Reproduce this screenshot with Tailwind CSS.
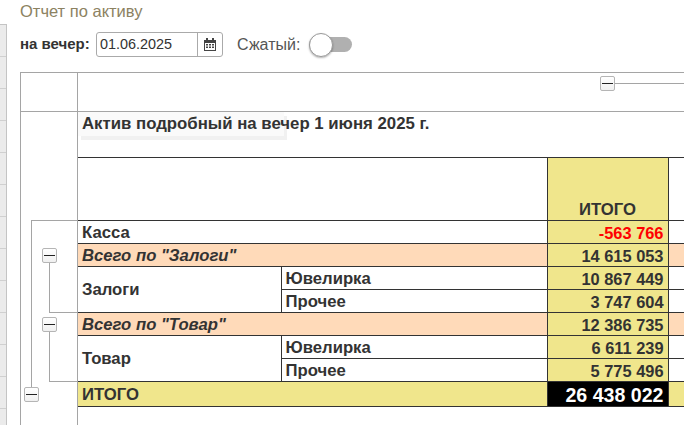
<!DOCTYPE html>
<html lang="en">

<head>
    <meta charset="UTF-8" />
    <script src="https://cdn.jsdelivr.net/npm/@tailwindcss/browser@4"></script>
    <title>Отчет по активу</title>
</head>

<body class="bg-white text-[#333] font-['Liberation_Sans',Arial,sans-serif] overflow-hidden">
    <div class="flex h-[425px] w-[684px] overflow-hidden">
        <!-- left strip -->
        <div class="mt-[24px] w-[7px] shrink-0 border-t border-r border-[#c4c4c4] bg-[#ebebeb]">
            <div class="h-[32px] border-b border-[#d0d0d0]"></div>
            <div class="h-[32px] border-b border-[#d0d0d0]"></div>
            <div class="h-[32px] border-b border-[#d0d0d0]"></div>
            <div class="h-[32px] border-b border-[#d0d0d0]"></div>
            <div class="h-[32px] border-b border-[#d0d0d0]"></div>
            <div class="h-[32px] border-b border-[#d0d0d0]"></div>
            <div class="h-[32px] border-b border-[#d0d0d0]"></div>
            <div class="h-[32px] border-b border-[#d0d0d0]"></div>
            <div class="h-[32px] border-b border-[#d0d0d0]"></div>
            <div class="h-[32px] border-b border-[#d0d0d0]"></div>
            <div class="h-[32px] border-b border-[#d0d0d0]"></div>
            <div class="h-[32px] border-b border-[#d0d0d0]"></div>
            <div class="h-[32px] border-b border-[#d0d0d0]"></div>
        </div>

        <div class="ml-[13px] w-[664px] shrink-0">
            <h1 class="h-[32px] pt-[2px] text-[16.5px] leading-[18px] text-[#8c8262]">Отчет по активу</h1>

            <div class="flex h-[25px] items-center text-[15px]">
                <b class="mr-[6px] w-[70px] whitespace-nowrap">на вечер:</b>
                <div class="flex h-[25px] w-[127px] rounded-[3px] border border-[#aaa]">
                    <div class="w-[100px] pl-[3px] text-[14.4px] leading-[22px]">01.06.2025</div>
                    <div class="flex flex-1 items-center justify-center border-l border-[#aaa]">
                        <svg width="12" height="13" viewBox="0 0 12 13" fill="#444">
                            <path d="M2 0h2v2H2zM8 0h2v2H8z" />
                            <path fill-rule="evenodd" d="M0 2h12v11H0zM1 5v7h10V5zM2 6h2v1.5H2zM5 6h2v1.5H5zM8 6h2v1.5H8zM2 8.500h2V10H2zM5 8.500h2V10H5zM8 8.500h2V10H8z" />
                        </svg>
                    </div>
                </div>
                <span class="ml-[14px] w-[64px] whitespace-nowrap text-[16px] text-[#555]">Сжатый:</span>
                <div class="relative ml-[8px] h-[15px] w-[43px] rounded-full bg-[#b0b0b0]">
                    <div class="absolute left-0 top-[-4px] h-[24px] w-[24px] rounded-full border border-[#999] bg-white shadow-[0_1px_2px_rgba(0,0,0,0.3)]"></div>
                </div>
            </div>

            <!-- report frame -->
            <div class="relative mt-[15px] h-[400px] w-[700px] border-l border-t border-[#a5a5a5]">
                <div class="flex h-[39px] border-b border-[#a5a5a5]">
                    <div class="w-[57px] border-r border-[#a5a5a5]"></div>
                    <div class="flex-1"></div>
                </div>

                <div class="flex">
                    <div class="h-[320px] w-[57px] shrink-0 border-r border-[#a5a5a5]"></div>
                    <div class="flex-1">
                        <div class="h-[45px]">
                            <div class="h-[24px] w-[206px] whitespace-nowrap bg-[#fafafa] pl-[4px] pt-[2px] text-[16.8px] font-bold leading-[19px] shadow-[3px_4px_0_#f1f1f1]">Актив подробный на вечер 1 июня 2025 г.</div>
                        </div>
                        <table class="w-[606px] table-fixed border-collapse text-[16.7px] font-bold leading-[18px] [&_td]:pt-[1px]">
                            <colgroup>
                                <col class="w-[203px]" />
                                <col class="w-[266px]" />
                                <col class="w-[121px]" />
                                <col class="w-[16px]" />
                            </colgroup>
                            <tr class="h-[63px] border-y border-[#333]">
                                <td colspan="2"></td>
                                <td class="border-x border-[#333] bg-[#f0e68c] pb-[1px] text-center align-bottom">ИТОГО</td>
                                <td></td>
                            </tr>
                            <tr class="h-[23px] border-b border-[#333]">
                                <td colspan="2" class="px-[4px]">Касса</td>
                                <td class="border-x border-[#333] bg-[#f0e68c] px-[4px] text-right text-[16.4px] text-[#f00]">-563 766</td>
                                <td></td>
                            </tr>
                            <tr class="h-[23px] border-b border-[#333] bg-[#ffdab9] italic">
                                <td colspan="2" class="px-[4px]">Всего по "Залоги"</td>
                                <td class="border-x border-[#333] bg-[#f0e68c] px-[4px] text-right text-[16.4px] not-italic">14 615 053</td>
                                <td></td>
                            </tr>
                            <tr class="h-[23px] border-b border-[#333]">
                                <td rowspan="2" class="border-r border-b border-[#333] px-[4px]">Залоги</td>
                                <td class="px-[4px]">Ювелирка</td>
                                <td class="border-x border-[#333] bg-[#f0e68c] px-[4px] text-right text-[16.4px]">10 867 449</td>
                                <td></td>
                            </tr>
                            <tr class="h-[23px] border-b border-[#333]">
                                <td class="px-[4px]">Прочее</td>
                                <td class="border-x border-[#333] bg-[#f0e68c] px-[4px] text-right text-[16.4px]">3 747 604</td>
                                <td></td>
                            </tr>
                            <tr class="h-[23px] border-b border-[#333] bg-[#ffdab9] italic">
                                <td colspan="2" class="px-[4px]">Всего по "Товар"</td>
                                <td class="border-x border-[#333] bg-[#f0e68c] px-[4px] text-right text-[16.4px] not-italic">12 386 735</td>
                                <td></td>
                            </tr>
                            <tr class="h-[23px] border-b border-[#333]">
                                <td rowspan="2" class="border-r border-b border-[#333] px-[4px]">Товар</td>
                                <td class="px-[4px]">Ювелирка</td>
                                <td class="border-x border-[#333] bg-[#f0e68c] px-[4px] text-right text-[16.4px]">6 611 239</td>
                                <td></td>
                            </tr>
                            <tr class="h-[23px] border-b border-[#333]">
                                <td class="px-[4px]">Прочее</td>
                                <td class="border-x border-[#333] bg-[#f0e68c] px-[4px] text-right text-[16.4px]">5 775 496</td>
                                <td></td>
                            </tr>
                            <tr class="h-[25px] border-b border-[#333] bg-[#f0e68c]">
                                <td colspan="2" class="px-[4px]">ИТОГО</td>
                                <td class="border-x border-[#333] bg-black px-[4px] text-right text-[19.6px] text-white">26 438 022</td>
                                <td></td>
                            </tr>
                        </table>
                    </div>
                </div>

                <!-- grouping tree over the frame -->
                <div class="absolute left-[10px] top-[147px] h-[168px] w-[47px] border-l border-t border-[#a5a5a5]"></div>
                <div class="absolute left-[28px] top-[189px] h-[51px] w-[29px] border-l border-b border-[#a5a5a5]"></div>
                <div class="absolute left-[28px] top-[258px] h-[51px] w-[29px] border-l border-b border-[#a5a5a5]"></div>
                <div class="absolute left-[593px] top-[10px] h-px w-[80px] bg-[#a5a5a5]"></div>
                <div class="absolute left-[21px] top-[175px] flex h-[15px] w-[15px] items-center justify-center rounded-[2px] border border-[#b5b5b5] bg-gradient-to-b from-white to-[#f0f0f0]"><span class="h-px w-[11px] bg-[#222]"></span></div>
                <div class="absolute left-[21px] top-[244px] flex h-[15px] w-[15px] items-center justify-center rounded-[2px] border border-[#b5b5b5] bg-gradient-to-b from-white to-[#f0f0f0]"><span class="h-px w-[11px] bg-[#222]"></span></div>
                <div class="absolute left-[3px] top-[314px] flex h-[15px] w-[15px] items-center justify-center rounded-[2px] border border-[#b5b5b5] bg-gradient-to-b from-white to-[#f0f0f0]"><span class="h-px w-[11px] bg-[#222]"></span></div>
                <div class="absolute left-[579px] top-[3px] flex h-[15px] w-[15px] items-center justify-center rounded-[2px] border border-[#b5b5b5] bg-gradient-to-b from-white to-[#f0f0f0]"><span class="h-px w-[11px] bg-[#222]"></span></div>
            </div>
        </div>
    </div>
</body>

</html>
